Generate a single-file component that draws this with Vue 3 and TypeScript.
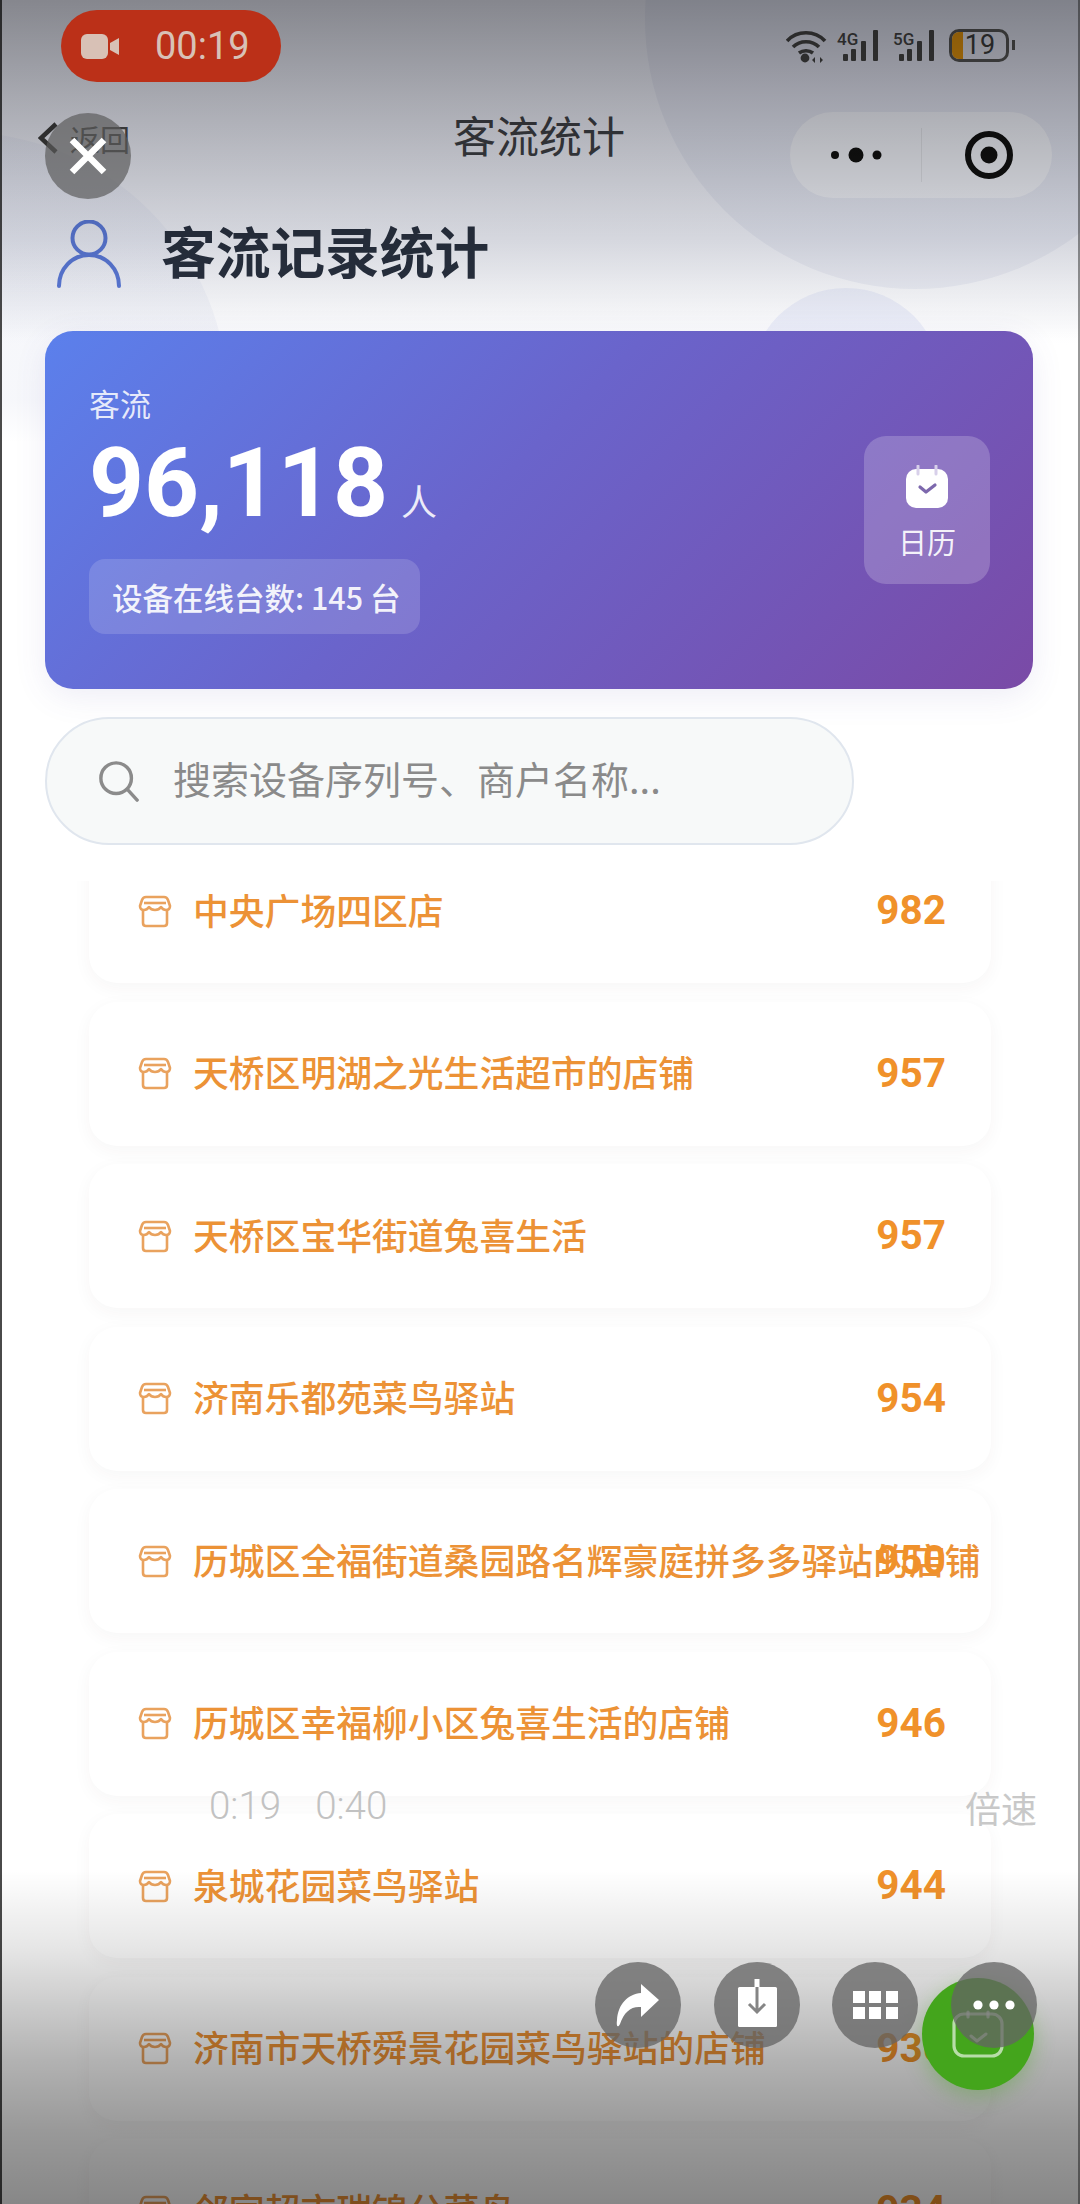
<script setup lang="ts">
interface Shop {
  name: string;
  count: number;
}

const shops: Shop[] = [
  { name: "中央广场四区店", count: 982 },
  { name: "天桥区明湖之光生活超市的店铺", count: 957 },
  { name: "天桥区宝华街道兔喜生活", count: 957 },
  { name: "济南乐都苑菜鸟驿站", count: 954 },
  { name: "历城区全福街道桑园路名辉豪庭拼多多驿站的店铺", count: 950 },
  { name: "历城区幸福柳小区兔喜生活的店铺", count: 946 },
  { name: "泉城花园菜鸟驿站", count: 944 },
  { name: "济南市天桥舜景花园菜鸟驿站的店铺", count: 936 },
  { name: "邻家超市瑞锦分菜鸟", count: 934 },
];
</script>

<template>
  <main class="page">
    <div class="blob blob--right"></div>
    <div class="blob blob--left"></div>
    <div class="blob blob--small"></div>

    <div class="status-bar">
      <div class="status-spacer"></div>
      <div class="status-icons">
        <svg class="wifi" width="42" height="34" viewBox="0 0 42 34" fill="none" stroke="#444" stroke-width="3.6">
          <path d="M1 12C11 1 29 1 39 12" />
          <path d="M7 18c7-7 19-7 26 0" />
          <path d="M13 24c4-3 10-3 14 0" />
          <circle cx="19" cy="29" r="4.4" fill="#444" stroke="none" />
          <path d="M29 28l-3 3 3 3zM34 28l3 3-3 3z" fill="#444" stroke="none" />
        </svg>
        <div v-for="net in ['4G', '5G']" :key="net" class="signal">
          <span class="signal__label">{{ net }}</span>
          <svg width="46" height="34" viewBox="0 0 46 34" fill="#444">
            <rect x="6" y="25" width="5" height="7" rx="1" />
            <rect x="14" y="20" width="5" height="12" rx="1" />
            <rect x="24" y="12" width="5" height="20" rx="1" />
            <rect x="36" y="1" width="5" height="31" rx="1" />
          </svg>
        </div>
        <div class="battery">
          <span class="battery__fill"></span>
          <span class="battery__level">19</span>
        </div>
        <span class="battery-nub"></span>
      </div>
    </div>

    <nav class="nav">
      <div class="back">
        <svg width="20" height="32" viewBox="0 0 20 32" fill="none" stroke="#3c3c3c" stroke-width="4.5">
          <path d="M18 2L3 16l15 14" />
        </svg>
        <span>返回</span>
      </div>
      <div class="nav__title">客流统计</div>
      <div class="capsule">
        <div class="capsule__cell capsule__cell--more">
          <svg width="54" height="18" viewBox="0 0 54 18" fill="#111">
            <circle cx="6" cy="9" r="4" />
            <circle cx="27" cy="9" r="7.5" />
            <circle cx="48" cy="9" r="4.5" />
          </svg>
        </div>
        <div class="capsule__cell">
          <svg width="50" height="50" viewBox="0 0 50 50" fill="none" stroke="#111" stroke-width="6">
            <circle cx="25" cy="25" r="21" />
            <circle cx="25" cy="25" r="8.5" fill="#111" stroke="none" />
          </svg>
        </div>
      </div>
    </nav>

    <header class="page-head">
      <svg width="66" height="68" viewBox="0 0 66 68" fill="none" stroke="#5a78d6" stroke-width="4" stroke-linecap="round">
        <circle cx="33" cy="18" r="16.5" />
        <path d="M3 66c0-17 13-31 30-31s30 14 30 31" />
      </svg>
      <h1>客流记录统计</h1>
    </header>

    <section class="hero">
      <div class="hero__main">
        <div class="hero__label">客流</div>
        <div class="hero__value">
          <strong>96,118</strong>
          <span>人</span>
        </div>
        <div class="hero__online">设备在线台数: 145 台</div>
      </div>
      <button type="button" class="hero__calendar">
        <svg width="44" height="44" viewBox="0 0 44 44">
          <rect x="1" y="4" width="42" height="39" rx="10" fill="#fff" />
          <path d="M13 1v8M31 1v8" stroke="#d8d0ea" stroke-width="3" stroke-linecap="round" />
          <path d="M15 22l6 5 9-7" fill="none" stroke="#7d68ad" stroke-width="3.2" stroke-linecap="round" stroke-linejoin="round" />
        </svg>
        <span>日历</span>
      </button>
    </section>

    <label class="search">
      <svg width="42" height="42" viewBox="0 0 44 44" fill="none" stroke="#8b8b8b" stroke-width="3.6" stroke-linecap="round">
        <circle cx="19" cy="19" r="16" />
        <path d="M31 31l10 11" />
      </svg>
      <span>搜索设备序列号、商户名称...</span>
    </label>

    <div class="list-view">
      <ul class="list">
        <li v-for="shop in shops" :key="shop.name" class="shop">
          <svg class="shop__icon" width="34" height="33" viewBox="0 0 34 33" fill="none" stroke="#e9a25e" stroke-width="2.6" stroke-linejoin="round">
            <path d="M8 2h18q3 0 4 3l2 6q0 4-4 4-3 0-5-3-2 3-6 3t-6-3q-2 3-5 3-4 0-4-4l2-6q1-3 4-3z" />
            <path d="M6 8h22" />
            <path d="M5 16v12q0 3 3 3h18q3 0 3-3V16" />
          </svg>
          <span class="shop__name">{{ shop.name }}</span>
          <span class="shop__count">{{ shop.count }}</span>
        </li>
      </ul>
    </div>

    <!-- video player chrome sits over the whole recording -->
    <div class="player">
      <div class="player__shade"></div>
      <button type="button" class="fab">
        <svg width="52" height="48" viewBox="0 0 52 48" fill="none" stroke="rgba(255,255,255,0.62)" stroke-width="3.2" stroke-linecap="round" stroke-linejoin="round">
          <rect x="2" y="4" width="48" height="42" rx="10" />
          <path d="M16 2v5M36 2v5" />
          <path d="M19 26l6 5 9-7" stroke-width="3" />
        </svg>
      </button>
      <div class="rec">
        <svg width="38" height="25" viewBox="0 0 38 25" fill="#d8c1b6">
          <rect x="0" y="0" width="27" height="25" rx="6" />
          <path d="M29 9l9-5v17l-9-5z" />
        </svg>
        <span>00:19</span>
      </div>
      <button type="button" class="player__close" aria-label="关闭">
        <svg width="40" height="40" viewBox="0 0 40 40" stroke="#fff" stroke-width="6.5">
          <path d="M4 4l32 32M36 4L4 36" />
        </svg>
      </button>
      <div class="player__time">
        <span>0:19</span>
        <span>0:40</span>
      </div>
      <div class="player__speed">倍速</div>
      <div class="player__actions">
        <button type="button" class="round" aria-label="分享">
          <svg width="86" height="86" viewBox="0 0 86 86" fill="#fff">
            <path d="M46 22l18 16-18 17V45c-10-1-17 5-21 17-2 4-4 3-3-4 1-16 11-26 24-27z" />
          </svg>
        </button>
        <button type="button" class="round" aria-label="保存">
          <svg width="86" height="86" viewBox="0 0 86 86" fill="#fff">
            <rect x="24" y="25" width="39" height="40" rx="1.5" />
            <rect x="40.5" y="17" width="5" height="8" />
            <path d="M43 25v25M35 42l8 8 8-8" fill="none" stroke="#858585" stroke-width="3" />
          </svg>
        </button>
        <button type="button" class="round" aria-label="更多功能">
          <svg width="86" height="86" viewBox="0 0 86 86" fill="#fff">
            <rect x="21" y="29" width="12" height="12" />
            <rect x="37" y="29" width="12" height="12" />
            <rect x="54" y="29" width="12" height="12" />
            <rect x="21" y="45" width="12" height="12" />
            <rect x="37" y="45" width="12" height="12" />
            <rect x="54" y="45" width="12" height="12" />
          </svg>
        </button>
        <button type="button" class="round" aria-label="更多">
          <svg width="86" height="86" viewBox="0 0 86 86" fill="#fff">
            <circle cx="27" cy="43" r="4.6" />
            <circle cx="43" cy="43" r="4.6" />
            <circle cx="59" cy="43" r="4.6" />
          </svg>
        </button>
      </div>
    </div>
  </main>
</template>

<style>
html,
body {
  margin: 0;
  background: #fff;
}
</style>

<style scoped>
* {
  box-sizing: border-box;
}

button {
  padding: 0;
  border: 0;
  font: inherit;
  cursor: pointer;
}

.page {
  position: relative;
  display: flex;
  flex-direction: column;
  width: 1080px;
  height: 2204px;
  overflow: hidden;
  background: linear-gradient(#e6e8f4 0, #eef0f8 240px, #fff 345px);
  font-family: "Noto Sans CJK SC", "Noto Sans", sans-serif;
}

.blob {
  position: absolute;
  border-radius: 50%;
}

.blob--right {
  top: -251px;
  left: 645px;
  width: 540px;
  height: 540px;
  background: rgba(125, 135, 175, 0.09);
}

.blob--left {
  top: 132px;
  left: -308px;
  width: 536px;
  height: 536px;
  background: linear-gradient(rgba(170, 180, 215, 0.1) 50%, rgba(170, 180, 215, 0) 58%);
}

.blob--small {
  top: 288px;
  left: 750px;
  width: 192px;
  height: 192px;
  background: rgba(150, 165, 225, 0.14);
}

.status-bar {
  position: relative;
  display: flex;
  justify-content: space-between;
  height: 112px;
  padding: 29px 65px 0 61px;
}

.status-icons {
  display: flex;
  align-items: flex-start;
}

.wifi {
  margin-right: 9px;
}

.signal {
  position: relative;
  width: 46px;
  height: 34px;
  margin-right: 10px;
}

.signal svg {
  display: block;
}

.signal__label {
  position: absolute;
  top: 0;
  left: 0;
  color: #444;
  font-family: Roboto, sans-serif;
  font-size: 17px;
  font-weight: 500;
  line-height: 20px;
}

.battery {
  position: relative;
  display: flex;
  justify-content: center;
  flex: none;
  width: 60px;
  height: 33px;
  border: 3px solid #555;
  border-radius: 10px;
  color: #3c3c3c;
  font-family: Roboto, sans-serif;
  font-size: 27px;
  line-height: 27px;
}

.battery__fill {
  position: absolute;
  top: 0;
  bottom: 0;
  left: 0;
  width: 11px;
  border-radius: 7px 0 0 7px;
  background: #e0930f;
}

.battery__level {
  position: relative;
  padding-left: 2px;
}

.battery-nub {
  width: 3px;
  height: 10px;
  margin: 11px 0 0 3px;
  background: #555;
}

.nav {
  position: relative;
  display: grid;
  grid-template-columns: 1fr auto 1fr;
  align-items: flex-start;
  height: 86px;
  padding: 0 28px 0 26px;
}

.back {
  display: flex;
  align-items: center;
  gap: 12px;
  margin: 9px 0 0 12px;
  color: #4a4a4a;
  font-size: 30px;
  line-height: 34px;
}

.nav__title {
  margin-top: -3px;
  color: #3e4045;
  font-size: 43px;
  line-height: 50px;
}

.capsule {
  display: grid;
  grid-template-columns: 132px 134px;
  justify-self: end;
  width: 262px;
  height: 86px;
  border-radius: 43px;
  background: rgba(255, 255, 255, 0.42);
}

.capsule__cell {
  display: flex;
  align-items: center;
  justify-content: center;
}

.capsule__cell--more {
  position: relative;
}

.capsule__cell--more::after {
  content: "";
  position: absolute;
  top: 16px;
  right: 0;
  bottom: 16px;
  width: 1px;
  background: rgba(0, 0, 0, 0.07);
}

.page-head {
  position: relative;
  display: flex;
  align-items: center;
  gap: 39px;
  height: 68px;
  margin-top: 22px;
  padding-left: 56px;
}

.page-head h1 {
  margin: -9px 0 0;
  color: #28303f;
  font-size: 54.7px;
  font-weight: 700;
  line-height: 68px;
}

.hero {
  position: relative;
  display: flex;
  align-items: center;
  justify-content: space-between;
  flex: none;
  width: 988px;
  height: 358px;
  margin: 43px 0 0 45px;
  padding: 0 43px 0 44px;
  border-radius: 28px;
  background: linear-gradient(135deg, #5b80ec 0%, #6a64cb 45%, #7a4aa6 100%);
  box-shadow: 0 8px 32px rgba(90, 80, 170, 0.1);
  color: #fff;
}

.hero__main {
  align-self: flex-start;
  padding-top: 52px;
}

.hero__label {
  color: rgba(255, 255, 255, 0.85);
  font-size: 31px;
  line-height: 40px;
}

.hero__value {
  display: flex;
  align-items: baseline;
  gap: 13px;
  height: 84px;
  margin-top: 18px;
  line-height: 84px;
}

.hero__value strong {
  font-family: Roboto, sans-serif;
  font-size: 96px;
  font-weight: 700;
}

.hero__value span {
  color: rgba(255, 255, 255, 0.88);
  font-size: 36px;
  line-height: 36px;
}

.hero__online {
  display: flex;
  align-items: center;
  width: 331px;
  height: 75px;
  margin-top: 34px;
  padding-left: 23px;
  border-radius: 16px;
  background: rgba(255, 255, 255, 0.15);
  color: rgba(255, 255, 255, 0.92);
  font-size: 30.5px;
  font-weight: 500;
  white-space: nowrap;
}

.hero__calendar {
  display: flex;
  flex-direction: column;
  align-items: center;
  width: 126px;
  height: 148px;
  padding-top: 29px;
  border-radius: 22px;
  background: rgba(255, 255, 255, 0.2);
  color: rgba(255, 255, 255, 0.92);
  font-size: 29px;
  line-height: 40px;
}

.hero__calendar span {
  margin-top: 12px;
}

.search {
  position: relative;
  display: flex;
  align-items: center;
  flex: none;
  gap: 33px;
  width: 809px;
  height: 128px;
  margin: 28px 0 0 45px;
  padding-left: 51px;
  border: 2px solid #e0e6ee;
  border-radius: 64px;
  background: #f7f9f9;
  color: #8a8a8a;
  font-size: 38px;
  white-space: nowrap;
}

.search span {
  margin-bottom: 8px;
}

.list-view {
  position: relative;
  flex: 1;
  min-height: 0;
  margin-top: 36px;
  overflow: hidden;
}

.list {
  display: flex;
  flex-direction: column;
  gap: 18.5px;
  margin: -42px 0 0;
  padding: 0 89px;
  list-style: none;
}

.shop {
  display: flex;
  align-items: center;
  flex: none;
  height: 144px;
  padding: 0 45px 0 49px;
  border-radius: 28px;
  background: #fff;
  box-shadow: 0 5px 18px rgba(70, 40, 40, 0.045);
}

.shop__icon {
  flex: none;
  margin-right: 21px;
}

.shop__name {
  flex: 1;
  min-width: 0;
  margin-bottom: 5px;
  color: #ec9236;
  font-size: 35.8px;
  font-weight: 500;
  white-space: nowrap;
}

.shop__count {
  position: relative;
  margin-bottom: 2px;
  color: #f0912a;
  font-family: Roboto, sans-serif;
  font-size: 40.5px;
  font-weight: 700;
}

.fab {
  position: absolute;
  top: 1978px;
  left: 920px;
  display: flex;
  align-items: center;
  justify-content: center;
  width: 112px;
  height: 112px;
  border-radius: 50%;
  background: #44a51c;
  box-shadow: 0 6px 20px rgba(68, 165, 28, 0.35);
}

.player {
  position: absolute;
  inset: 0;
  border-right: 2px solid rgba(50, 50, 50, 0.5);
  border-left: 2px solid rgba(30, 30, 30, 0.8);
}

.player__shade {
  position: absolute;
  inset: 0 -2px;
  background:
    linear-gradient(
      rgba(0, 0, 0, 0.42) 0,
      rgba(0, 0, 0, 0.28) 100px,
      rgba(0, 0, 0, 0.15) 200px,
      rgba(0, 0, 0, 0.05) 285px,
      rgba(0, 0, 0, 0) 340px,
      rgba(0, 0, 0, 0) 1870px,
      rgba(0, 0, 0, 0.1) 1950px,
      rgba(0, 0, 0, 0.3) 2060px,
      rgba(0, 0, 0, 0.4) 2130px,
      rgba(0, 0, 0, 0.47) 2204px
    );
}

.rec {
  position: absolute;
  top: 10px;
  left: 59px;
  display: flex;
  align-items: center;
  gap: 36px;
  width: 220px;
  height: 72px;
  padding-left: 20px;
  border-radius: 36px;
  background: #bb3018;
  color: #d8c1b6;
  font-family: Roboto, sans-serif;
  font-size: 38px;
}

.player__close {
  position: absolute;
  top: 113px;
  left: 43px;
  display: flex;
  align-items: center;
  justify-content: center;
  width: 86px;
  height: 86px;
  border-radius: 50%;
  background: rgba(90, 90, 90, 0.68);
}

.player__time {
  position: absolute;
  top: 1785px;
  left: 207px;
  display: flex;
  gap: 34px;
  color: #c2c2c2;
  font-family: Roboto, sans-serif;
  font-size: 38.5px;
  font-weight: 300;
  line-height: 42px;
}

.player__speed {
  position: absolute;
  top: 1783px;
  left: 963px;
  color: #c8c8c8;
  font-size: 36px;
  line-height: 48px;
}

.player__actions {
  position: absolute;
  top: 1962px;
  left: 593px;
  display: flex;
  gap: 32.5px;
}

.round {
  width: 86px;
  height: 86px;
  border-radius: 50%;
  background: rgba(100, 100, 100, 0.76);
}

.round svg {
  display: block;
}
</style>
